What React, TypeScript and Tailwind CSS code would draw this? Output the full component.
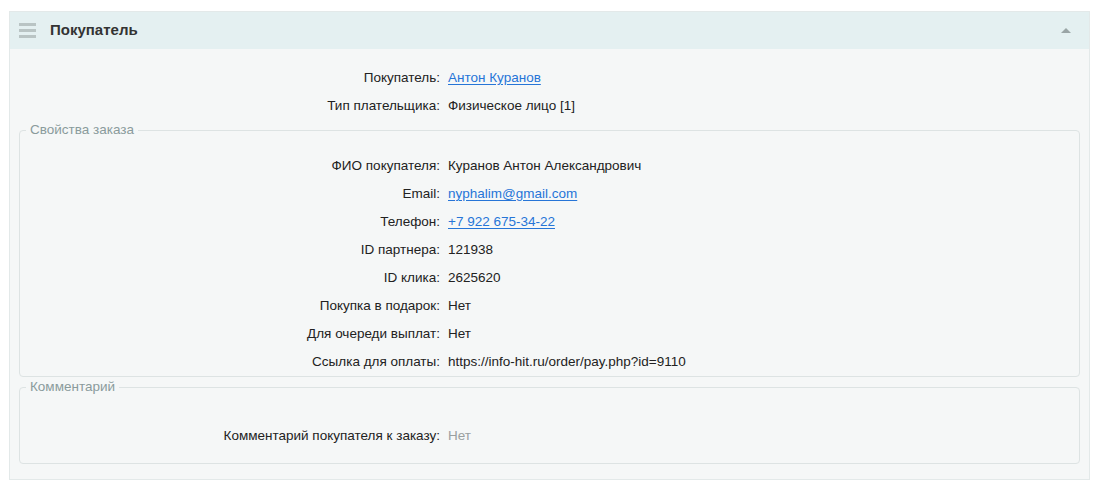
type Row = { label: string; value: string; kind?: "link" | "muted" };

const buyerRows: Row[] = [
  { label: "Покупатель:", value: "Антон Куранов", kind: "link" },
  { label: "Тип плательщика:", value: "Физическое лицо [1]" },
];

const orderRows: Row[] = [
  { label: "ФИО покупателя:", value: "Куранов Антон Александрович" },
  { label: "Email:", value: "nyphalim@gmail.com", kind: "link" },
  { label: "Телефон:", value: "+7 922 675-34-22", kind: "link" },
  { label: "ID партнера:", value: "121938" },
  { label: "ID клика:", value: "2625620" },
  { label: "Покупка в подарок:", value: "Нет" },
  { label: "Для очереди выплат:", value: "Нет" },
  { label: "Ссылка для оплаты:", value: "https://info-hit.ru/order/pay.php?id=9110" },
];

function PropRow({ row }: { row: Row }) {
  return (
    <div className="flex h-[28px] items-center">
      <div className="w-[420px] shrink-0 text-right text-[#222]">{row.label}</div>
      <div className="pl-[8px]">
        {row.kind === "link" ? (
          <a href="#" className="text-[#2675d7] underline underline-offset-2">
            {row.value}
          </a>
        ) : row.kind === "muted" ? (
          <span className="text-[#9aa0a0]">{row.value}</span>
        ) : (
          <span className="text-[#222]">{row.value}</span>
        )}
      </div>
    </div>
  );
}

function Group({ title, children, className }: { title: string; children: React.ReactNode; className?: string }) {
  return (
    <fieldset className={"rounded-[4px] border border-[#dde3e3] px-0 " + (className ?? "")}>
      <legend className="ml-[6px] px-[4px] text-[13.5px] leading-[16px] text-[#8a9b9c]">{title}</legend>
      {children}
    </fieldset>
  );
}

export default function App() {
  return (
    <div
      className="min-h-[491px] bg-white px-[9px] pt-[11px] text-[13.5px]"
      style={{ fontFamily: '"Liberation Sans", Arial, sans-serif' }}
    >
      <div className="w-[1081px] border border-[#e3e9e9] bg-[#f5f7f7]">
        {/* шапка блока */}
        <div className="flex h-[37px] items-center bg-[#e4f0f1] pl-[9px] pr-[18px]">
          <div className="flex w-[17px] flex-col gap-[3px]">
            <span className="h-[3px] bg-[#b9c4c4]" />
            <span className="h-[3px] bg-[#b9c4c4]" />
            <span className="h-[3px] bg-[#b9c4c4]" />
          </div>
          <div className="ml-[14px] text-[15px] font-bold text-[#333]">Покупатель</div>
          <div className="ml-auto h-0 w-0 border-x-[5px] border-b-[5px] border-x-transparent border-b-[#9aa5a6]" />
        </div>

        <div className="px-[9px] pb-[15px] pt-[15px]">
          <div className="pl-[1px]">
            {buyerRows.map((r) => (
              <PropRow key={r.label} row={r} />
            ))}
          </div>

          <Group title="Свойства заказа" className="mt-[2px] pt-[14px] pb-0">
            {orderRows.map((r) => (
              <PropRow key={r.label} row={r} />
            ))}
          </Group>

          <Group title="Комментарий" className="mt-[2px] pt-[27px] pb-[13px]">
            <PropRow row={{ label: "Комментарий покупателя к заказу:", value: "Нет", kind: "muted" }} />
          </Group>
        </div>
      </div>
    </div>
  );
}
